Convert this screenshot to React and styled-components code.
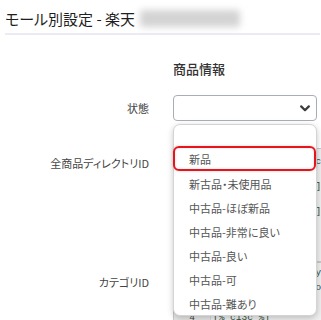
import React from 'react';
import styled, { createGlobalStyle } from 'styled-components';

const GlobalStyle = createGlobalStyle`
    html, body {
        margin: 0;
        padding: 0;
        background: #ffffff;
        overflow: hidden;
    }
    body {
        font-family: "Noto Sans CJK JP", "Noto Sans", sans-serif;
        font-feature-settings: "palt";
        color: #333333;
    }
`;

const Page = styled.div`
    width: 321px;
    height: 320px;
    overflow: hidden;
`;

// ページタイトル
const Header = styled.div`
    display: flex;
    align-items: center;
    gap: 5px;
    height: 29px;
    padding-top: 4px;
    margin: 0 1px 0 5px;
    border-bottom: 2px solid #ecebf3;
`;

const Title = styled.h1`
    margin: 0;
    font-size: 15px;
    font-weight: 400;
    line-height: 20px;
    color: #1f1f1f;
    white-space: nowrap;
`;

// ショップ名 (ぼかし)
const Blurred = styled.span`
    width: 100px;
    height: 17px;
    background: #d3d3d3;
    border-radius: 3px;
    filter: blur(3.5px);
`;

const Row = styled.div`
    display: grid;
    grid-template-columns: 149px 1fr;
    column-gap: 24px;
    align-items: ${p => p.$align || 'start'};
    margin-top: ${p => p.$gap}px;
`;

const Heading = styled.h2`
    grid-column: 2;
    margin: 0;
    font-size: 13px;
    font-weight: 500;
    line-height: 18px;
    color: #333333;
`;

const Label = styled.label`
    text-align: right;
    font-size: 11px;
    line-height: 16px;
    color: #444444;
    padding-top: ${p => p.$top || 0}px;
    white-space: nowrap;
`;

const SelectWrap = styled.div`
    position: relative;
    width: 144px;
`;

const SelectBox = styled.div`
    display: flex;
    align-items: center;
    justify-content: flex-end;
    height: 26px;
    box-sizing: border-box;
    padding-right: 6px;
    border: 1px solid #a9aeb6;
    border-radius: 4px;
    background: #ffffff;
`;

// 開いたドロップダウン
const Menu = styled.ul`
    position: absolute;
    top: calc(100% + 3px);
    left: 0;
    right: 0;
    z-index: 2;
    margin: 0;
    padding: 0;
    list-style: none;
    background: #ffffff;
    border: 1px solid #d4d4d4;
    border-radius: 7px;
    box-shadow: 0 2px 6px rgba(0, 0, 0, 0.22);
`;

const Option = styled.li`
    box-sizing: border-box;
    height: ${p => (p.$blank ? 21 : 24)}px;
    padding: 3px 0 0 15px;
    font-size: 11px;
    line-height: 21px;
    color: #555555;
    white-space: nowrap;
    ${p => p.$marked && `
        margin-left: -1px;
        padding-left: 14px;
        padding-top: 1px;
        height: 25px;
        border: 2px solid #e8141c;
        border-radius: 6px;
        box-shadow: 0 0 3px rgba(0, 0, 0, 0.18), inset 0 0 3px rgba(0, 0, 0, 0.12);
    `}
`;

// コード入力欄 (メニューの下に隠れている)
const CodeBox = styled.div`
    display: flex;
    width: 170px;
    height: ${p => p.$height}px;
    border: 1px solid #c9c9c9;
    background: #efefef;
    font-family: "Liberation Mono", monospace;
    font-size: 9.5px;
    line-height: ${p => p.$line}px;
    overflow: hidden;
`;

const Gutter = styled.div`
    width: 36px;
    flex: none;
    padding-top: ${p => p.$top}px;
    text-align: center;
    color: #444444;
    background: #e6e6e6;
    border-right: 1px solid #d6d6d6;
`;

const Code = styled.div`
    padding: ${p => p.$top}px 0 0 2px;
    color: #2f4f3a;
    white-space: pre;
`;

const Chevron = () => (
    <svg width="10" height="7" viewBox="0 0 10 7">
        <polyline points="1.2,1.4 5,5.2 8.8,1.4" fill="none" stroke="#3c3c3c" strokeWidth="2.2" strokeLinecap="round" strokeLinejoin="round" />
    </svg>
);

const options = [
    '新品',
    '新古品・未使用品',
    '中古品-ほぼ新品',
    '中古品-非常に良い',
    '中古品-良い',
    '中古品-可',
    '中古品-難あり',
];

const App = () => {
    return (
        <Page>
            <GlobalStyle />
            <Header>
                <Title>モール別設定 - 楽天</Title>
                <Blurred />
            </Header>

            <Row $gap={25}>
                <Heading>商品情報</Heading>
            </Row>

            <Row $gap={17} $align="center">
                <Label>状態</Label>
                <SelectWrap>
                    <SelectBox>
                        <Chevron />
                    </SelectBox>
                    <Menu>
                        <Option $blank />
                        {options.map((o, i) => (
                            <Option key={o} $marked={i === 0}>{o}</Option>
                        ))}
                    </Menu>
                </SelectWrap>
            </Row>

            <Row $gap={27}>
                <Label $top={7}>全商品ディレクトリID</Label>
                <CodeBox $height={112} $line={25}>
                    <Gutter $top={0}>1<br />2<br />3</Gutter>
                    <Code $top={0}>{'[% item.directory_code %]e\n[% IF item.genre %][\n[% item.genre_id %][['}</Code>
                </CodeBox>
            </Row>

            <Row $gap={0}>
                <Label $top={12}>カテゴリID</Label>
                <CodeBox $height={80} $line={15}>
                    <Gutter $top={2}>1<br />2<br />3<br />4</Gutter>
                    <Code $top={2}>{'[% IF item.category %]\n[% item.category_code e %]\n[% END %]\n[% c13c %]'}</Code>
                </CodeBox>
            </Row>
        </Page>
    );
};

export default App;
